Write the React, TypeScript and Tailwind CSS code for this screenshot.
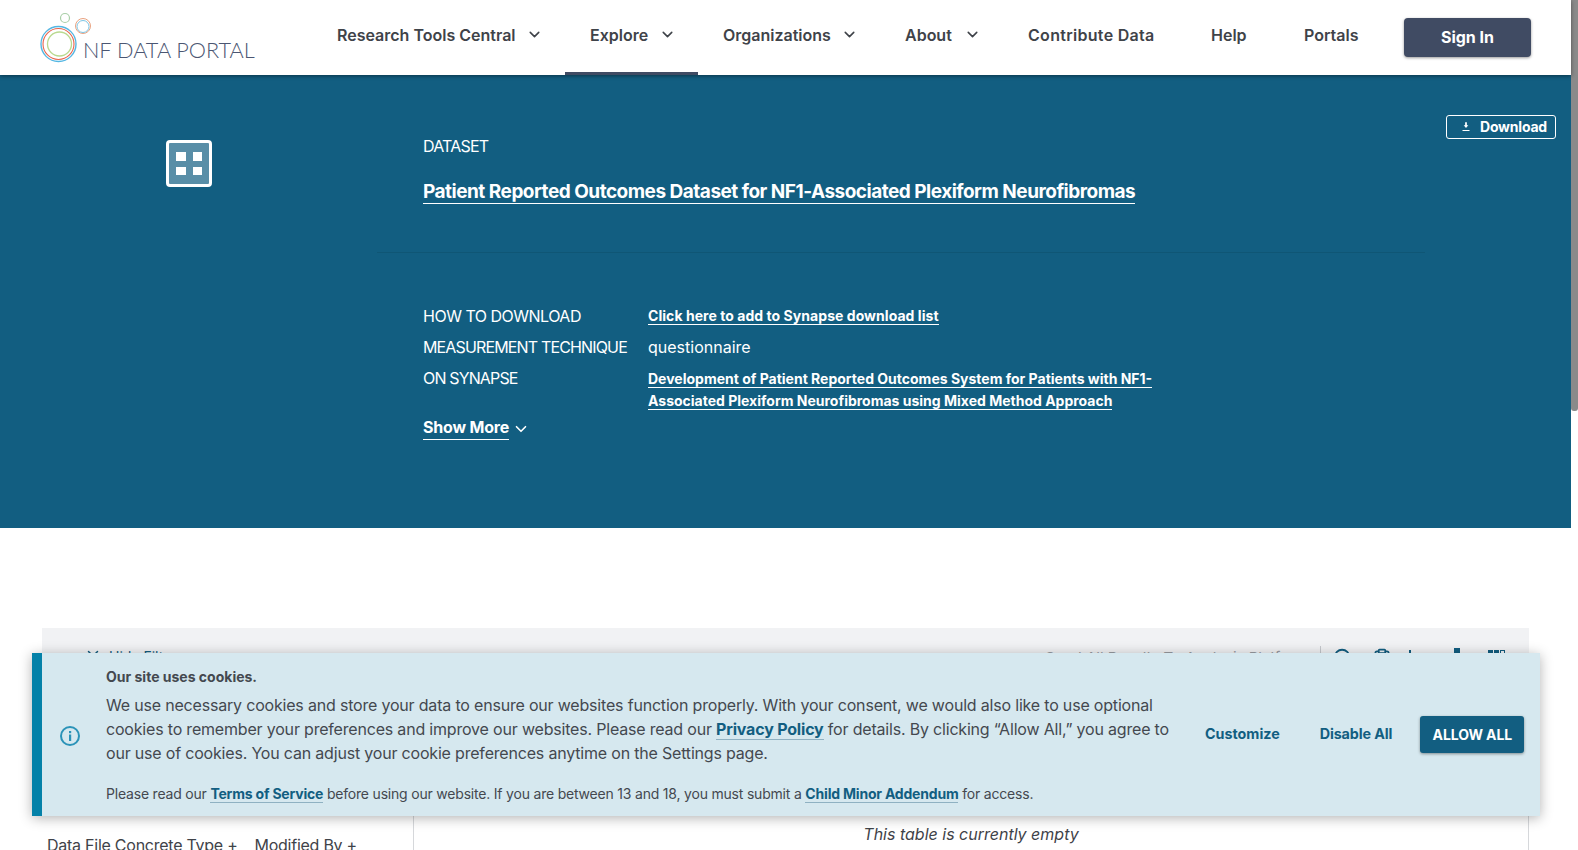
import { ChevronDown, ClipboardList, Search, X } from "lucide-react";

const navItems = [
  { label: "Research Tools Central", width: "w-[253px]", caret: true },
  { label: "Explore", width: "w-[133px]", caret: true, active: true },
  { label: "Organizations", width: "w-[182px]", caret: true },
  { label: "About", width: "w-[123px]", caret: true },
  { label: "Contribute Data", width: "w-[183px] tracking-[0.3px]", caret: false },
  { label: "Help", width: "w-[93px]", caret: false },
  { label: "Portals", width: "w-[125px]", caret: false },
];

function Logo() {
  return (
    <div className="flex items-end w-[312px] h-[75px] pl-[40px] pb-[11px]">
      <svg width="52" height="54" viewBox="0 0 52 54" className="shrink-0" fill="none">
        <circle cx="18.5" cy="34" r="17.5" stroke="#55b7e3" strokeWidth="1.4" />
        <circle cx="18.5" cy="34" r="15.5" stroke="#e8654f" strokeWidth="1.1" />
        <circle cx="19.5" cy="34" r="12" stroke="#b9d98f" strokeWidth="1.3" />
        <circle cx="43" cy="16" r="7.5" stroke="#e9a27f" strokeWidth="1" />
        <circle cx="43" cy="16.5" r="6" stroke="#7cc4e4" strokeWidth="1" />
        <circle cx="25" cy="8" r="4.5" stroke="#a9cfa8" strokeWidth="1.2" />
      </svg>
      <span className="font-['Lato',sans-serif] font-light text-[21.7px] leading-[22px] text-[#4b5672] -ml-[9px] mb-[3px] whitespace-nowrap">
        NF DATA PORTAL
      </span>
    </div>
  );
}

function Header() {
  return (
    <header className="relative z-10 flex h-[75px] shrink-0 bg-white shadow-[0_1px_4px_rgba(0,0,0,0.45)]">
      <Logo />
      <nav className="flex h-full">
        {navItems.map((item) => (
          <div
            key={item.label}
            className={`${item.width} relative flex h-full items-center pl-[25px] pb-[6px] text-[16px] font-semibold text-[#3f4349]`}
          >
            <span className="whitespace-nowrap">{item.label}</span>
            {item.caret && (
              <ChevronDown size={17} strokeWidth={2.2} className="ml-auto mr-[22px] text-[#3f4349]" />
            )}
            {item.active && (
              <div className="absolute bottom-0 left-0 right-0 h-[3px] bg-[#404b63]" />
            )}
          </div>
        ))}
      </nav>
      <div className="flex items-center">
        <button className="h-[39px] w-[127px] rounded-[4px] bg-[#404b63] pb-[1px] text-[16px] font-bold text-white shadow-[0_1px_3px_rgba(0,0,0,0.4)]">
          Sign In
        </button>
      </div>
    </header>
  );
}

function Hero() {
  return (
    <section className="flex h-[453px] shrink-0 bg-[#125e81] text-white">
      <div className="w-[423px] shrink-0 pl-[166px] pt-[65px]">
        <div className="grid h-[47px] w-[46px] grid-cols-2 gap-x-[7px] gap-y-[6px] rounded-[4px] border-[3px] border-white bg-white/30 px-[7px] py-[9px]">
          <div className="bg-white" />
          <div className="bg-white" />
          <div className="bg-white" />
          <div className="bg-white" />
        </div>
      </div>

      <div className="w-[1003px] shrink-0 pt-[59px]">
        <div className="text-[16px] leading-[24px] tracking-[-0.8px]">DATASET</div>
        <h1 className="mt-[20px] text-[19px] leading-[28px] tracking-[-0.5px]">
          <span className="border-b border-white font-bold">
            Patient Reported Outcomes Dataset for NF1-Associated Plexiform Neurofibromas
          </span>
        </h1>
        <div className="mt-[46px] -ml-[46px] w-[1048px] border-t border-[#0f5675]" />

        <div className="mt-[51px] grid grid-cols-[225px_1fr] text-[16px] leading-[24px]">
          <div className="tracking-[-0.5px]">HOW TO DOWNLOAD</div>
          <div className="text-[14px] font-bold tracking-[0.05px]">
            <span className="border-b border-white">Click here to add to Synapse download list</span>
          </div>
          <div className="mt-[7px] tracking-[-0.85px]">MEASUREMENT TECHNIQUE</div>
          <div className="mt-[7px]">questionnaire</div>
          <div className="mt-[7px] tracking-[-0.85px]">ON SYNAPSE</div>
          <div className="mt-[9px] text-[14px] font-bold leading-[22px]">
            <span className="border-b border-white">
              Development of Patient Reported Outcomes System for Patients with NF1-
              <br />
              Associated Plexiform Neurofibromas using Mixed Method Approach
            </span>
          </div>
        </div>

        <div className="mt-[3px] flex items-center text-[16px] font-bold leading-[24px] tracking-[-0.2px]">
          <span className="border-b border-white">Show More</span>
          <ChevronDown size={18} strokeWidth={2.2} className="ml-[3px] mt-[2px]" />
        </div>
      </div>

      <div className="flex flex-1 justify-end pr-[15px] pt-[40px]">
        <button className="flex h-[24px] w-[110px] items-center rounded-[3px] border border-white pb-[1px] pl-[12px] text-[14px] font-bold tracking-[-0.2px]">
          <svg width="14" height="14" viewBox="0 0 24 24" fill="currentColor" className="mr-[7px] shrink-0">
            <path d="M16 9h-2.5V4h-3v5H8l4 4.5L16 9zM6 17v2h12v-2H6z" />
          </svg>
          Download
        </button>
      </div>
    </section>
  );
}

function ResultsPanel() {
  return (
    <section className="mx-[42px] mt-[100px] shrink-0">
      <div className="flex h-[60px] items-start bg-[#f1f2f4] pt-[18px]">
        <div className="-mt-[1px] flex items-center pl-[42px] text-[#125e81]">
          <X size={18} strokeWidth={2} />
          <span className="ml-[7px] mt-[2px] text-[14px] leading-[20px] text-[#125e81]">Hide Filters</span>
        </div>
        <div className="ml-auto flex items-center text-[#125e81]">
          <span className="text-[15px] leading-[20px] text-[#9a9da3]">Send All Results To Analysis Platform</span>
          <div className="ml-[12px] h-[24px] border-l border-[#c4c7cc]" />
          <Search size={22} strokeWidth={2} className="ml-[11px]" />
          <ClipboardList size={20} strokeWidth={2} className="ml-[18px]" />
          <svg width="20" height="20" viewBox="0 0 20 20" fill="currentColor" className="ml-[15px]">
            <rect x="2" y="2" width="2" height="14" />
            <rect x="9" y="6" width="3" height="10" />
          </svg>
          <svg width="20" height="20" viewBox="0 0 20 20" fill="currentColor" className="ml-[21px]">
            <rect x="6" y="0" width="6" height="16" />
          </svg>
          <svg width="20" height="20" viewBox="0 0 20 20" className="ml-[19px] mr-[22px]">
            <rect x="1" y="2" width="5" height="14" fill="currentColor" />
            <rect x="7" y="2" width="5" height="14" fill="currentColor" />
            <rect x="13.5" y="2.5" width="4" height="13" fill="none" stroke="currentColor" />
          </svg>
        </div>
      </div>
      <div className="flex h-[200px] border-r border-[#d6d8db]">
        <div className="w-[372px] shrink-0 border-r border-[#d6d8db] pl-[5px] pt-[145px] text-[16px] leading-[24px] tracking-[-0.25px] text-[#3f4349]">
          <span>Data File Concrete Type +</span>
          <span className="ml-[17px]">Modified By +</span>
        </div>
        <div className="flex-1 pt-[135px] text-center text-[16px] italic leading-[22px] text-[#3f4349]">
          This table is currently empty
        </div>
      </div>
    </section>
  );
}

function CookieBanner() {
  return (
    <div className="absolute left-[32px] top-[653px] z-20 flex h-[163px] w-[1508px] items-center border-l-[10px] border-[#0481a8] bg-[#d6e8ef] shadow-[0_2px_12px_rgba(0,0,0,0.3)]">
      <svg width="22" height="22" viewBox="0 0 22 22" fill="none" className="ml-[17px] mt-[2px] shrink-0">
        <circle cx="11" cy="11" r="9" stroke="#2b93b8" strokeWidth="2" />
        <rect x="10" y="9.5" width="2.2" height="6.5" fill="#2b93b8" />
        <rect x="10" y="6" width="2.2" height="2.2" fill="#2b93b8" />
      </svg>
      <div className="ml-[25px] mt-[2px] w-[1068px] shrink-0 whitespace-nowrap text-[#44484f]">
        <div className="text-[14px] font-bold leading-[20px]">Our site uses cookies.</div>
        <p className="mt-[6px] text-[16px] leading-[24px] tracking-[-0.19px]">
          We use necessary cookies and store your data to ensure our websites function properly. With your consent, we would also like to use optional
          <br />
          cookies to remember your preferences and improve our websites. Please read our{" "}
          <span className="border-b border-[#8fb1c2] font-bold text-[#125e81]">Privacy Policy</span> for details. By clicking “Allow All,” you agree to
          <br />
          our use of cookies. You can adjust your cookie preferences anytime on the Settings page.
        </p>
        <p className="mt-[19px] text-[14px] leading-[20px] tracking-[-0.2px]">
          Please read our{" "}
          <span className="border-b border-[#8fb1c2] font-bold text-[#125e81]">Terms of Service</span> before using our website. If you are between 13 and 18, you must submit a{" "}
          <span className="border-b border-[#8fb1c2] font-bold text-[#125e81]">Child Minor Addendum</span> for access.
        </p>
      </div>
      <div className="ml-[31px] -mt-[1px] flex items-center text-[14.3px] font-bold text-[#125e81]">
        <span>Customize</span>
        <span className="ml-[40px] tracking-[-0.1px]">Disable All</span>
        <button className="ml-[28px] h-[37px] w-[104px] rounded-[3px] bg-[#125e81] text-[14px] font-bold tracking-[-0.1px] text-white shadow-[0_1px_3px_rgba(0,0,0,0.4)]">
          ALLOW ALL
        </button>
      </div>
    </div>
  );
}

export default function App() {
  return (
    <div className="relative flex h-screen overflow-hidden bg-white font-['Inter',sans-serif]">
      <main className="flex min-w-0 flex-1 flex-col">
        <Header />
        <Hero />
        <ResultsPanel />
      </main>
      <div className="w-[7px] shrink-0">
        <div className="h-[411px] rounded-b-[3px] bg-[#8a8a8a]" />
      </div>
      <CookieBanner />
    </div>
  );
}
